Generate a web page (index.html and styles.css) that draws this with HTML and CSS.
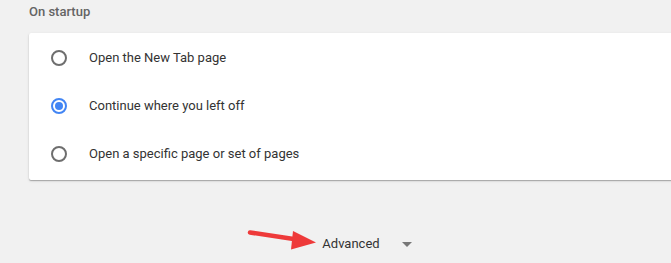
FILE: index.html
```html
<!DOCTYPE html>
<html lang="en">
<head>
    <meta charset="UTF-8">
    <meta name="viewport" content="width=device-width, initial-scale=1.0">
    <title>Settings - On startup</title>
    <link rel="stylesheet" href="styles.css">
</head>
<body>
    <div class="page">
        <h2 class="section-title">On startup</h2>
        <div class="card">
            <label class="option">
                <span class="radio"></span>
                <span class="option-label">Open the New Tab page</span>
            </label>
            <label class="option">
                <span class="radio checked"></span>
                <span class="option-label">Continue where you left off</span>
            </label>
            <label class="option">
                <span class="radio"></span>
                <span class="option-label">Open a specific page or set of pages</span>
            </label>
        </div>
        <div class="advanced">
            <span class="advanced-text">Advanced</span>
            <span class="caret"></span>
        </div>
    </div>

    <!-- red annotation arrow pointing at the Advanced button -->
    <svg class="arrow" width="75" height="26" viewBox="245 226 75 26">
        <line x1="250" y1="232.5" x2="297" y2="239.5" stroke="#ee3a3a" stroke-width="4.5" stroke-linecap="round"/>
        <polygon points="293,231 316,242.5 291,249.5" fill="#ee3a3a"/>
    </svg>
</body>
</html>
```

FILE: styles.css
```css
body {
    margin: 0;
    background-color: #f1f1f1;
    font-family: Roboto, "Liberation Sans", Arial, sans-serif;
    font-size: 13px;
    overflow: hidden;
}
.page {
    width: 674px;
    padding-left: 29px;
}
.section-title {
    margin: 0;
    padding-top: 4px;
    font-size: 13px;
    line-height: 16px;
    font-weight: 500;
    color: #646464;
}
.card {
    margin-top: 13px;
    background-color: #fff;
    border-radius: 2px;
    padding: 1px 0 2px;
    box-shadow: 0 1px 1px rgba(0, 0, 0, 0.25), 0 1px 3px rgba(0, 0, 0, 0.12);
}
.option {
    display: flex;
    align-items: center;
    height: 48px;
    padding-left: 22px;
}
.radio {
    box-sizing: border-box;
    width: 16px;
    height: 16px;
    border: 2px solid #6e6e6e;
    border-radius: 50%;
    display: flex;
    align-items: center;
    justify-content: center;
}
.radio.checked {
    border-color: #4285f4;
}
.radio.checked::after {
    content: "";
    width: 8px;
    height: 8px;
    border-radius: 50%;
    background-color: #4285f4;
}
.option-label {
    margin-left: 22px;
    color: #333;
    line-height: 16px;
}
.advanced {
    margin-top: 56px;
    display: flex;
    justify-content: center;
    align-items: center;
    line-height: 16px;
    padding-left: 2px;
}
.advanced-text {
    color: #333;
}
.caret {
    margin-left: 22px;
    margin-top: 1px;
    width: 0;
    height: 0;
    border-left: 5px solid transparent;
    border-right: 5px solid transparent;
    border-top: 5px solid #777;
}
.arrow {
    position: absolute;
    left: 245px;
    top: 226px;
}
```
